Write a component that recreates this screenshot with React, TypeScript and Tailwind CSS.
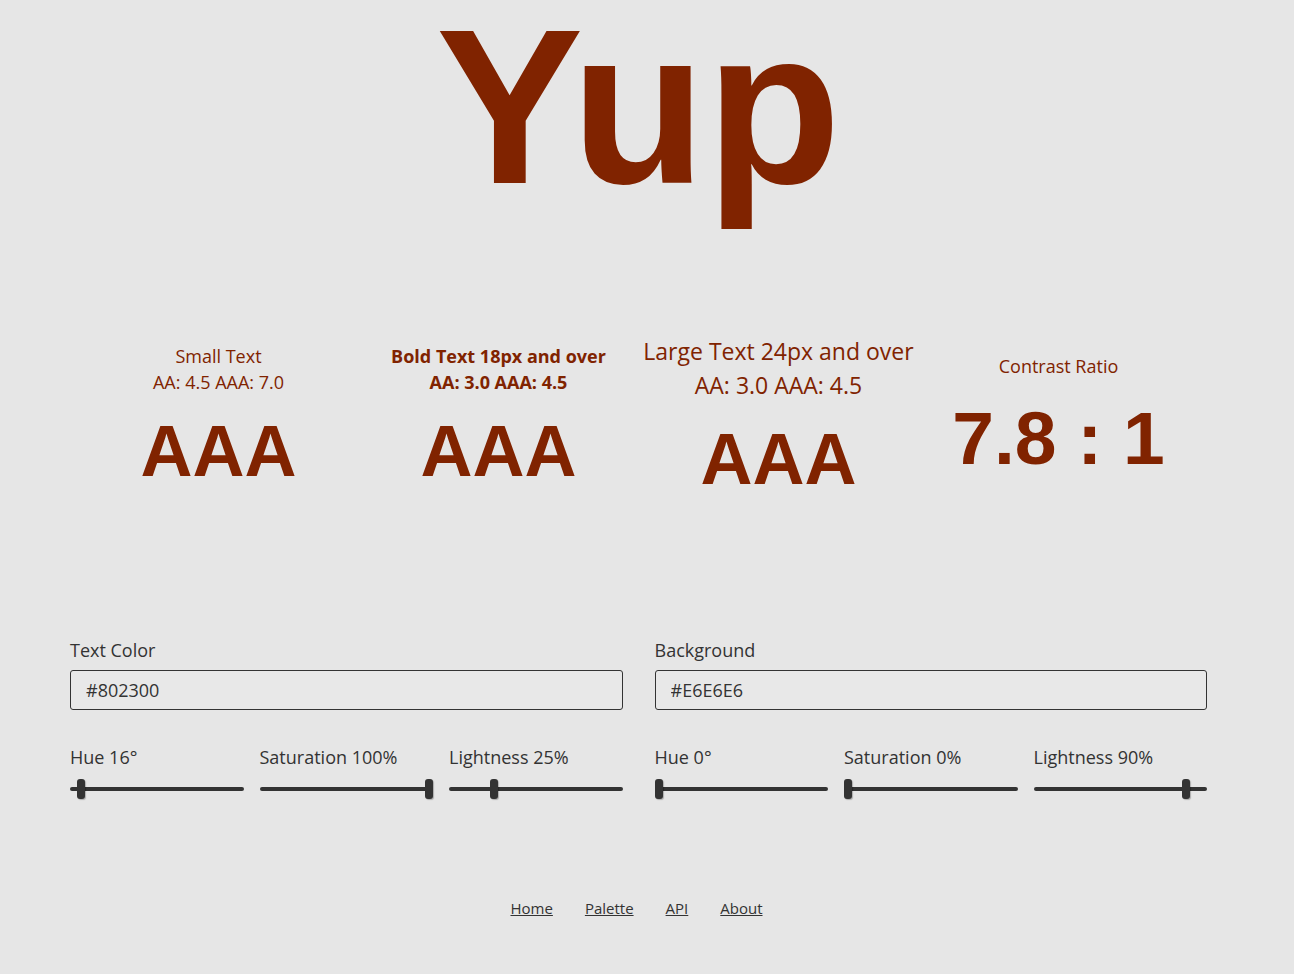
import * as React from 'react';

const TEXT = '#802300';
const ARIAL = '"Liberation Sans", Arial, sans-serif';

function Slider({ label, value, max }: { label: string; value: number; max: number }) {
  const pct = value / max;
  return (
    <div className="flex flex-col">
      <span className="text-[18px] leading-[26px] text-[#333]">{label}</span>
      <div className="relative mt-[9px] h-[20px]">
        <div className="absolute left-0 right-0 top-[8px] h-[4px] rounded-full bg-[#333]" />
        <div
          className="absolute top-0 h-[20px] w-[8px] rounded-[3px] bg-[#333] shadow-[1px_1px_1px_rgba(0,0,0,0.25)]"
          style={{ left: `calc((100% - 8px) * ${pct})` }}
        />
      </div>
    </div>
  );
}

function ColorPanel({
  title,
  hex,
  h,
  s,
  l,
}: {
  title: string;
  hex: string;
  h: number;
  s: number;
  l: number;
}) {
  return (
    <div className="flex flex-col">
      <label className="text-[18px] leading-[26px] text-[#333]">{title}</label>
      <input
        readOnly
        value={hex}
        className="mt-[7px] h-[40px] w-full rounded-[3px] border border-[#333] bg-[#e8e8e8] px-[15px] text-[18px] text-[#333] outline-none"
      />
      <div className="mt-[34px] grid grid-cols-3 gap-x-[16px]">
        <Slider label={`Hue ${h}°`} value={h} max={360} />
        <Slider label={`Saturation ${s}%`} value={s} max={100} />
        <Slider label={`Lightness ${l}%`} value={l} max={100} />
      </div>
    </div>
  );
}

export default function App() {
  return (
    <div
      className="min-h-screen overflow-hidden bg-[#e6e6e6] pr-[17px] pb-[40px]"
      style={{ fontFamily: '"Open Sans", "Noto Sans", sans-serif' }}
    >
      <h1
        className="-mt-[17px] text-center text-[221px] font-bold leading-[1.12]"
        style={{ color: TEXT, fontFamily: ARIAL }}
      >
        Yup
      </h1>

      <section className="mt-[84px] flex h-[200px] items-center justify-center" style={{ color: TEXT }}>
        <div className="flex w-[280px] flex-col items-center whitespace-nowrap">
          <p className="text-[18px] leading-[26px]">Small Text</p>
          <p className="text-[18px] leading-[26px]">AA: 4.5 AAA: 7.0</p>
          <p className="mt-[20px] text-[72px] font-bold leading-none" style={{ fontFamily: ARIAL }}>
            AAA
          </p>
        </div>
        <div className="flex w-[280px] flex-col items-center whitespace-nowrap">
          <p className="text-[18px] font-bold leading-[26px]">Bold Text 18px and over</p>
          <p className="text-[18px] font-bold leading-[26px]">AA: 3.0 AAA: 4.5</p>
          <p className="mt-[20px] text-[72px] font-bold leading-none" style={{ fontFamily: ARIAL }}>
            AAA
          </p>
        </div>
        <div className="flex w-[280px] flex-col items-center whitespace-nowrap">
          <p className="text-[23px] leading-[34px]">Large Text 24px and over</p>
          <p className="text-[23px] leading-[34px]">AA: 3.0 AAA: 4.5</p>
          <p className="mt-[21px] text-[72px] font-bold leading-none" style={{ fontFamily: ARIAL }}>
            AAA
          </p>
        </div>
        <div className="flex w-[280px] flex-col items-center whitespace-nowrap">
          <p className="text-[18px] leading-[26px]">Contrast Ratio</p>
          <p className="mt-[22px] text-[75px] font-bold leading-none" style={{ fontFamily: ARIAL }}>
            7.8 : 1
          </p>
        </div>
      </section>

      <section className="mt-[122px] grid grid-cols-2 gap-x-[32px] px-[70px]">
        <ColorPanel title="Text Color" hex="#802300" h={16} s={100} l={25} />
        <ColorPanel title="Background" hex="#E6E6E6" h={0} s={0} l={90} />
      </section>

      <footer className="mt-[99px] flex justify-center gap-x-[32px] pr-[4px] text-[15px] leading-[20px] text-[#333]">
        <a href="#" className="underline">Home</a>
        <a href="#" className="underline">Palette</a>
        <a href="#" className="underline">API</a>
        <a href="#" className="underline">About</a>
      </footer>
    </div>
  );
}
